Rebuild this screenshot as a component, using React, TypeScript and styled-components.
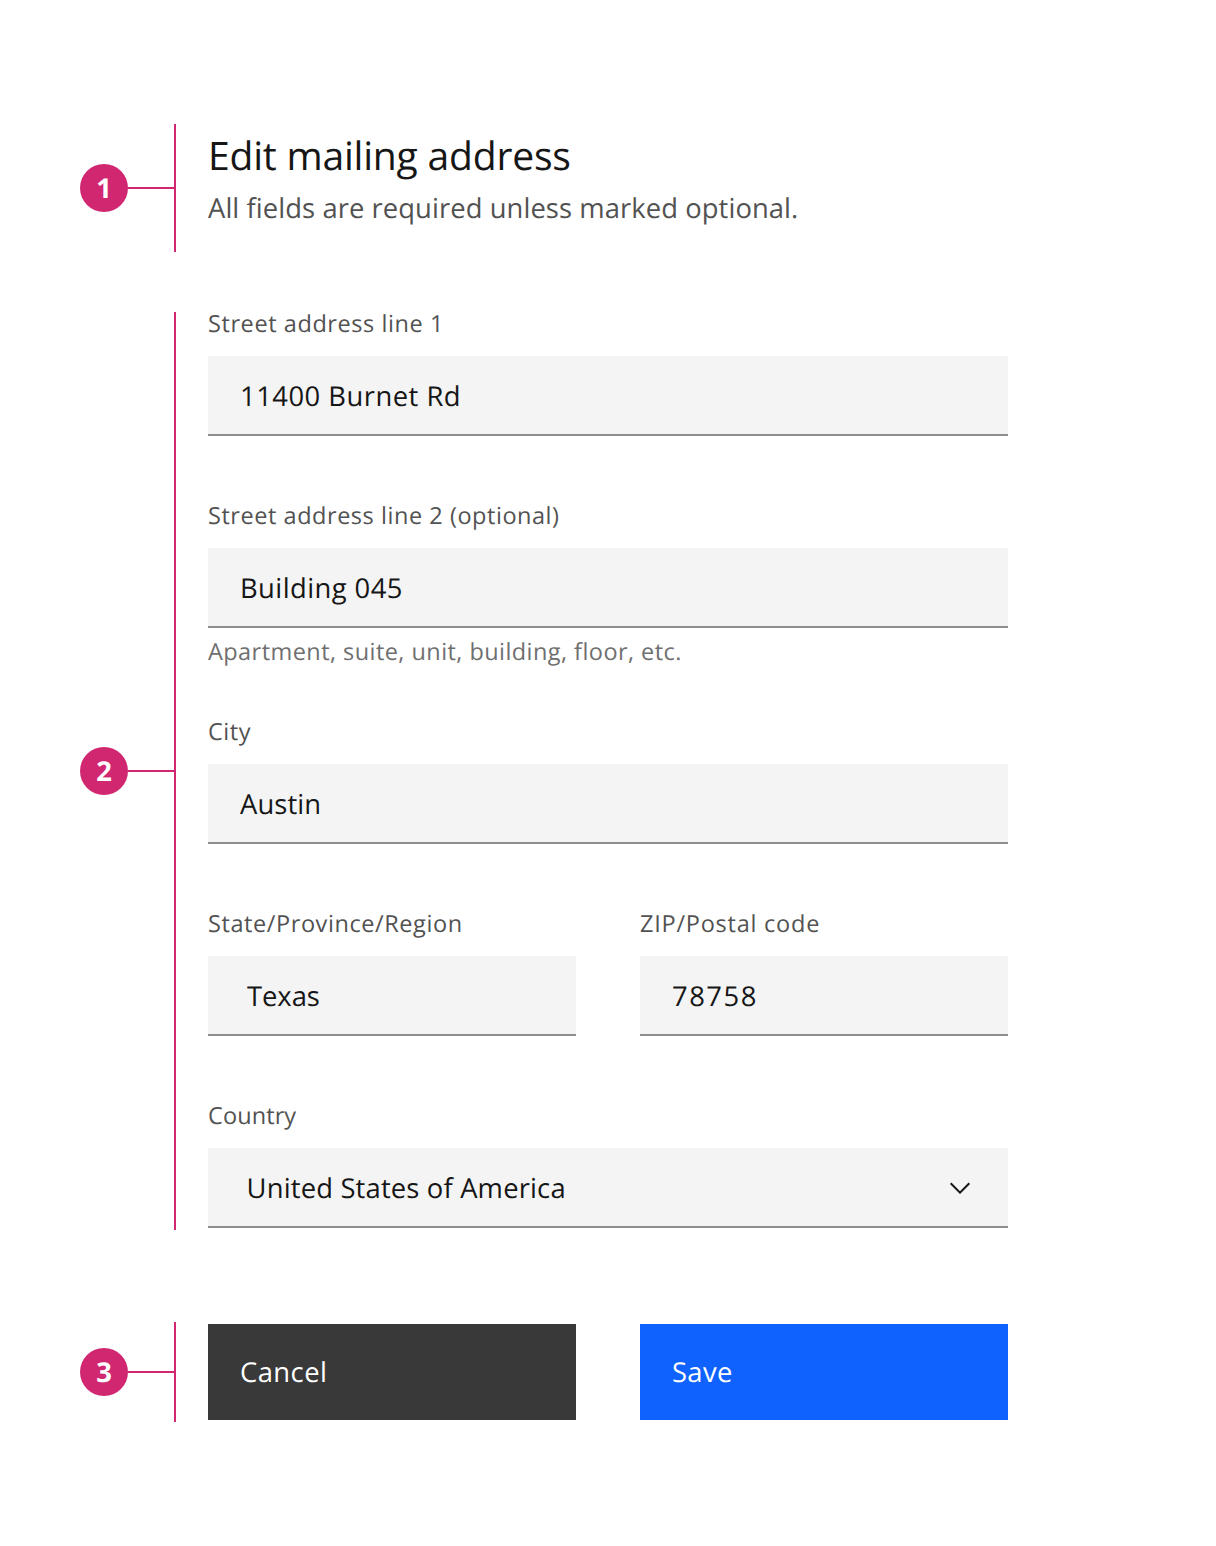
import React from "react";
import styled, { createGlobalStyle } from "styled-components";

const color = {
  accent: "#d12771",
  text: "#161616",
  label: "#525252",
  helper: "#6f6f6f",
  field: "#f4f4f4",
  border: "#8d8d8d",
  secondary: "#393939",
  primary: "#0f62fe",
};

const GlobalStyle = createGlobalStyle`
  *, *::before, *::after { box-sizing: border-box; }
  body {
    margin: 0;
    background: #fff;
    font-family: "Open Sans", "Noto Sans", sans-serif;
    text-rendering: geometricPrecision;
  }
`;

const Page = styled.main`
  display: flex;
  flex-direction: column;
  width: 1216px;
  min-height: 1546px;
  padding: 124px 0 0 80px;
`;

const Section = styled.section<{ $height: number; $after?: number }>`
  display: flex;
  height: ${(p) => p.$height}px;
  margin-bottom: ${(p) => p.$after ?? 0}px;
`;

const Marker = styled.div`
  display: flex;
  align-items: center;
  width: 96px;
  margin-right: 32px;
  border-right: 2px solid ${color.accent};
`;

const Badge = styled.span`
  display: flex;
  align-items: center;
  justify-content: center;
  width: 48px;
  height: 48px;
  padding-top: 2px;
  border-radius: 50%;
  background: ${color.accent};
  color: #fff;
  font-size: 27.4px;
  font-weight: 700;
  line-height: 46px;
`;

const Connector = styled.span`
  flex: 1;
  height: 2px;
  background: ${color.accent};
`;

const Content = styled.div<{ $top?: number }>`
  display: flex;
  flex-direction: column;
  width: 800px;
  padding-top: ${(p) => p.$top ?? 0}px;
`;

const Title = styled.h1`
  margin: 0 0 11px;
  color: ${color.text};
  font-size: 39.1px;
  font-weight: 400;
  line-height: 48px;
  letter-spacing: -0.22px;
`;

const Subtitle = styled.p`
  margin: 0;
  color: ${color.label};
  font-size: 27.4px;
  line-height: 36px;
  letter-spacing: 0.07px;
`;

const FieldGroup = styled.div`
  display: flex;
  flex: 1;
  flex-direction: column;
`;

const FieldRow = styled.div<{ $after?: number }>`
  display: flex;
  gap: 64px;
  margin-bottom: ${(p) => p.$after ?? 0}px;
`;

const Label = styled.span<{ $track: number }>`
  margin-bottom: 22px;
  color: ${color.label};
  font-size: 23.5px;
  line-height: 22px;
  letter-spacing: ${(p) => p.$track}px;
  white-space: nowrap;
`;

const Control = styled.div<{ $inset?: number; $track: number }>`
  display: flex;
  align-items: center;
  justify-content: space-between;
  height: 80px;
  padding: 2px 32px 0 ${(p) => p.$inset ?? 32}px;
  border-bottom: 2px solid ${color.border};
  background: ${color.field};
  color: ${color.text};
  font-size: 27.4px;
  line-height: 38px;
  letter-spacing: ${(p) => p.$track}px;
`;

const Value = styled.span`
  padding-top: 2px;
`;

const Helper = styled.span`
  margin-top: 12px;
  color: ${color.helper};
  font-size: 23.5px;
  line-height: 22px;
  letter-spacing: 0.44px;
`;

const Chevron = styled.svg`
  width: 32px;
  height: 32px;
  fill: ${color.text};
`;

const Button = styled.button<{ $kind: "primary" | "secondary"; $track: number }>`
  flex: 1;
  height: 96px;
  padding: 2px 32px 0;
  border: 0;
  background: ${(p) => color[p.$kind]};
  color: #fff;
  font-family: inherit;
  font-size: 27.4px;
  line-height: 36px;
  letter-spacing: ${(p) => p.$track}px;
  text-align: left;
  text-rendering: inherit;
`;

interface FieldProps {
  label: string;
  labelTrack: number;
  value: string;
  valueTrack: number;
  inset?: number;
  helper?: string;
  select?: boolean;
}

function Field({ label, labelTrack, value, valueTrack, inset, helper, select }: FieldProps) {
  return (
    <FieldGroup>
      <Label $track={labelTrack}>{label}</Label>
      <Control $inset={inset} $track={valueTrack}>
        <Value>{value}</Value>
        {select && (
          <Chevron viewBox="0 0 16 16" aria-hidden="true">
            <path d="M8 11L3 6 3.7 5.3 8 9.6 12.3 5.3 13 6z" />
          </Chevron>
        )}
      </Control>
      {helper && <Helper>{helper}</Helper>}
    </FieldGroup>
  );
}

function Callout({ step }: { step: number }) {
  return (
    <Marker>
      <Badge>{step}</Badge>
      <Connector />
    </Marker>
  );
}

export default function App() {
  return (
    <>
      <GlobalStyle />
      <Page>
        <Section $height={128} $after={60}>
          <Callout step={1} />
          <Content $top={8}>
            <Title>Edit mailing address</Title>
            <Subtitle>All fields are required unless marked optional.</Subtitle>
          </Content>
        </Section>

        <Section $height={918} $after={92}>
          <Callout step={2} />
          <Content>
            <FieldRow $after={68}>
              <Field label="Street address line 1" labelTrack={0.58} value="11400 Burnet Rd" valueTrack={0.48} />
            </FieldRow>
            <FieldRow $after={58}>
              <Field
                label="Street address line 2 (optional)"
                labelTrack={0.543}
                value="Building 045"
                valueTrack={0.42}
                helper="Apartment, suite, unit, building, floor, etc."
              />
            </FieldRow>
            <FieldRow $after={68}>
              <Field label="City" labelTrack={0.52} value="Austin" valueTrack={0.1} />
            </FieldRow>
            <FieldRow $after={68}>
              <Field label="State/Province/Region" labelTrack={0.58} value="Texas" valueTrack={-0.05} inset={39} />
              <Field label="ZIP/Postal code" labelTrack={0.763} value="78758" valueTrack={1.5} />
            </FieldRow>
            <FieldRow>
              <Field
                label="Country"
                labelTrack={0.1}
                value="United States of America"
                valueTrack={0.16}
                inset={38.6}
                select
              />
            </FieldRow>
          </Content>
        </Section>

        <Section $height={100}>
          <Callout step={3} />
          <Content $top={2}>
            <FieldRow>
              <Button $kind="secondary" $track={0.436}>Cancel</Button>
              <Button $kind="primary" $track={0.35}>Save</Button>
            </FieldRow>
          </Content>
        </Section>
      </Page>
    </>
  );
}
